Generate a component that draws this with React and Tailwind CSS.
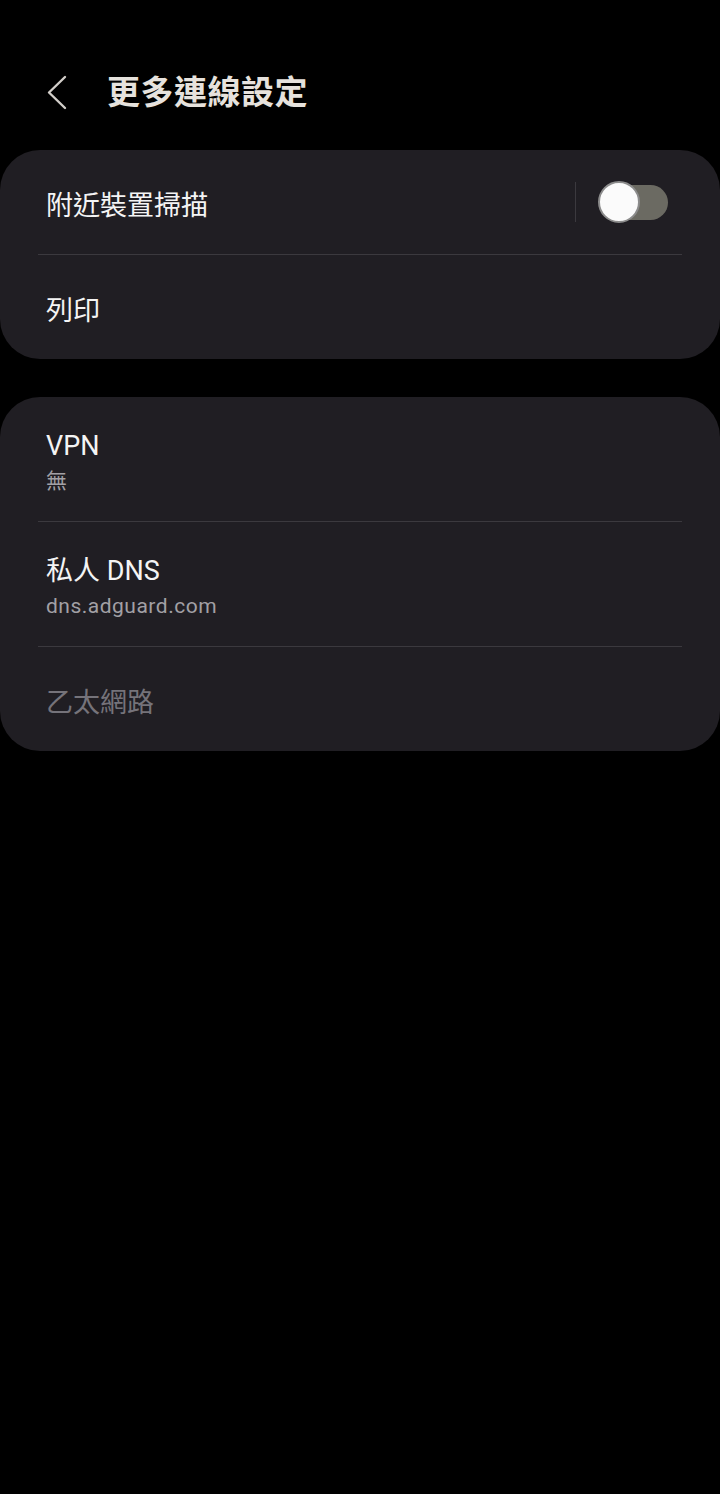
import React from 'react';

const FONT = "font-['Roboto','Noto_Sans_CJK_TC',sans-serif]";

// Toggle switch (off state)
const Toggle = () => (
  <div className="relative w-[70px] h-[42px] flex items-center">
    <div className="absolute left-[2px] right-0 h-[35px] rounded-full bg-[#6b6a62]" />
    <div className="absolute left-0 w-[42px] h-[42px] rounded-full bg-[#fbfbfb] border-2 border-[#8c8c8c]" />
  </div>
);

const Divider = () => <div className="mx-[38px] h-px bg-[#3b393e]" />;

const Row = ({ title, subtitle, disabled, tall, right }) => (
  <div className={`flex items-center pl-[46px] pr-[52px] ${tall ? 'h-[124px]' : 'h-[104px]'}`}>
    <div className="flex-1 flex flex-col pt-[7px]">
      <span className={`text-[27px] leading-[36px] ${disabled ? 'text-[#75737a]' : 'text-[#f4f4f4]'}`}>
        {title}
      </span>
      {subtitle && (
        <span className="text-[21px] leading-[34px] tracking-[0.5px] text-[#a2a0a5]">{subtitle}</span>
      )}
    </div>
    {right}
  </div>
);

export default function App() {
  return (
    <div className={`w-[720px] min-h-[1494px] bg-black ${FONT}`}>
      {/* Header */}
      <div className="h-[150px] pt-[36px] flex items-center">
        <svg width="22" height="36" viewBox="0 0 22 36" className="ml-[46px]">
          <polyline
            points="19,2 3,17.5 19,33"
            fill="none"
            stroke="#d2cec9"
            strokeWidth="2.4"
            strokeLinecap="round"
            strokeLinejoin="round"
          />
        </svg>
        <h1 className="ml-[39px] text-[33px] font-bold text-[#e6e2dd] tracking-[0.5px]">更多連線設定</h1>
      </div>

      {/* Card 1 */}
      <div className="bg-[#201e23] rounded-[40px]">
        <Row
          title="附近裝置掃描"
          right={
            <div className="flex items-center gap-[22px]">
              <div className="w-px h-[40px] bg-[#3b393e]" />
              <Toggle />
            </div>
          }
        />
        <Divider />
        <Row title="列印" />
      </div>

      {/* Card 2 */}
      <div className="mt-[38px] bg-[#201e23] rounded-[40px]">
        <Row title="VPN" subtitle="無" tall />
        <Divider />
        <Row title="私人 DNS" subtitle="dns.adguard.com" tall />
        <Divider />
        <Row title="乙太網路" disabled />
      </div>
    </div>
  );
}
